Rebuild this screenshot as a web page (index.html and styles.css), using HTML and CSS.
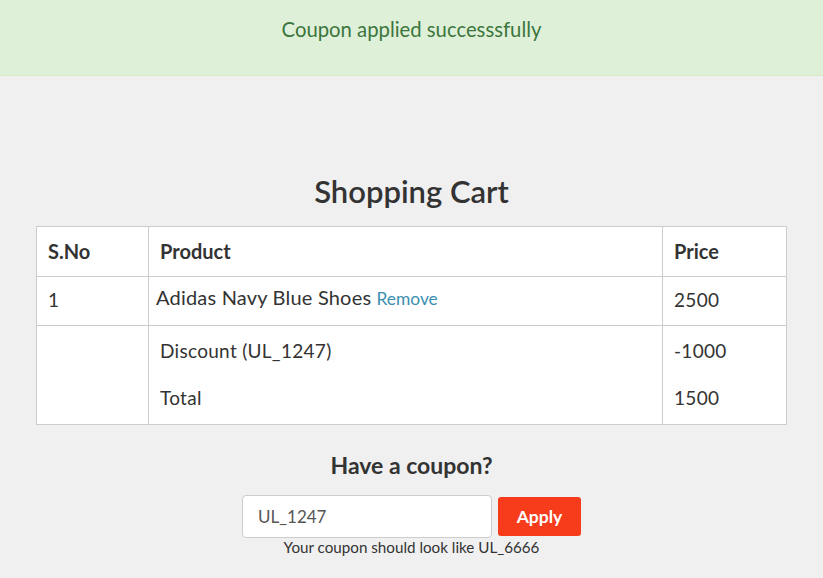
FILE: index.html
```html
<!DOCTYPE html>
<html>
<head>
<meta charset="utf-8">
<link rel="stylesheet" href="styles.css">
</head>
<body>
<div class="alert">Coupon applied successsfully</div>
<main class="cart">
  <h1 class="title">Shopping Cart</h1>
  <table class="table">
    <colgroup>
      <col class="c1"><col class="c2"><col class="c3">
    </colgroup>
    <thead>
      <tr><th>S.No</th><th>Product</th><th>Price</th></tr>
    </thead>
    <tbody>
      <tr class="item"><td>1</td><td class="prod"><span class="name">Adidas Navy Blue Shoes</span> <a class="remove" href="#">Remove</a></td><td>2500</td></tr>
      <tr class="sum first"><td></td><td>Discount (UL_1247)</td><td>-1000</td></tr>
      <tr class="sum last"><td></td><td>Total</td><td>1500</td></tr>
    </tbody>
  </table>
  <h2 class="coupon-title">Have a coupon?</h2>
  <form class="coupon">
    <div class="coupon-row">
      <input class="coupon-input" type="text" value="UL_1247">
      <button class="apply" type="button">Apply</button>
    </div>
    <p class="hint">Your coupon should look like UL_6666</p>
  </form>
</main>
</body>
</html>
```
FILE: styles.css
```css
html, body {
  margin: 0;
  padding: 0;
}
body {
  background: #f0f0f0;
  font-family: Lato, "Open Sans", sans-serif;
  color: #333;
}
.alert {
  background: #dff0d8;
  color: #3c763d;
  border-bottom: 1px solid #d6e9c6;
  height: 76px;
  box-sizing: border-box;
  padding-top: 16px;
  text-align: center;
  font-size: 20.3px;
  line-height: 26px;
}
.cart {
  padding: 0 36px;
}
.title {
  margin: 98px 0 0;
  height: 52px;
  text-align: center;
  font-size: 31px;
  font-weight: 600;
  line-height: 34px;
  color: #333;
}
.table {
  width: 750px;
  table-layout: fixed;
  border-collapse: collapse;
  background: #fff;
  font-size: 19px;
  letter-spacing: 0.3px;
  line-height: 24px;
}
.c1 { width: 112px; }
.c2 { width: 514px; }
.c3 { width: 124px; }
.table th, .table td {
  border: 1px solid #ccc;
  text-align: left;
  padding: 0 11px;
}
.table th {
  padding-top: 12px;
  padding-bottom: 13px;
  font-weight: 700;
  font-size: 20px;
  letter-spacing: 0;
}
.item td {
  padding-top: 11px;
  padding-bottom: 13px;
}
.item td.prod {
  padding-left: 7px;
  padding-top: 8px;
  padding-bottom: 14px;
}
.name {
  font-size: 20px;
  letter-spacing: 0.2px;
}
.remove {
  color: #3a8fb0;
  text-decoration: none;
  font-size: 17.4px;
  letter-spacing: 0;
}
.sum.first td {
  border-bottom: none;
  padding-top: 13px;
  padding-bottom: 12px;
}
.sum.last td {
  border-top: none;
  padding-top: 11px;
  padding-bottom: 14px;
}
.coupon-title {
  margin: 26px 0 0;
  text-align: center;
  font-size: 23px;
  line-height: 28px;
  font-weight: 700;
}
.coupon {
  margin: 16px 0 0;
}
.coupon-row {
  display: flex;
  justify-content: center;
  align-items: center;
  gap: 6px;
}
.coupon-input {
  width: 250px;
  height: 43px;
  box-sizing: border-box;
  border: 1px solid #ccc;
  border-radius: 4px;
  padding: 0 15px;
  font-family: inherit;
  font-size: 17px;
  color: #555;
  background: #fff;
}
.apply {
  width: 83px;
  height: 39px;
  border: none;
  border-radius: 3px;
  background: #f63c1b;
  color: #fff;
  font-family: inherit;
  font-size: 17.5px;
  font-weight: 700;
}
.hint {
  margin: 0;
  text-align: center;
  font-size: 15.2px;
  line-height: 18px;
  color: #333;
}
```
